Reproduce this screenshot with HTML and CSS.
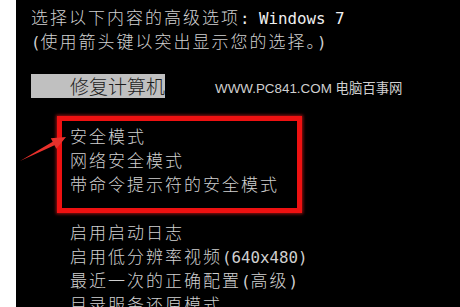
FILE: index.html
```html
<!DOCTYPE html>
<html lang="zh-CN">
<head>
<meta charset="utf-8">
<title>高级启动选项</title>
<link rel="stylesheet" href="styles.css">
</head>
<body>
<div class="strip"></div>
<main class="screen">
  <p class="line">选择以下内容的高级选项<span class="en bright">: Windows 7</span></p>
  <p class="line"><span class="en">(</span>使用箭头键以突出显示您的选择。<span class="en">)</span></p>

  <div class="selected">修复计算机</div>

  <div class="redbox">
    <p class="line">安全模式</p>
    <p class="line">网络安全模式</p>
    <p class="line">带命令提示符的安全模式</p>
  </div>

  <div class="list">
    <p class="line">启用启动日志</p>
    <p class="line">启用低分辨率视频<span class="en">(640x480)</span></p>
    <p class="line">最近一次的正确配置<span class="en">(</span>高级<span class="en">)</span></p>
    <p class="line">目录服务还原模式</p>
  </div>

  <div class="watermark">WWW.PC841.COM 电脑百事网</div>

  <svg class="arrow" width="80" height="60" viewBox="0 0 80 60" aria-hidden="true">
    <polygon points="4,49 36.7,29.7 34.8,26.2 50,25 40.4,36.8 38.5,33.3" fill="#e8302b"/>
  </svg>
</main>
</body>
</html>
```

FILE: styles.css
```css
html, body {
  margin: 0;
  padding: 0;
}

body {
  width: 460px;
  height: 307px;
  overflow: hidden;
  background: #000;
  display: flex;
  font-family: "Noto Sans CJK SC", "DejaVu Sans", sans-serif;
  font-weight: 300;
  font-size: 17px;
  letter-spacing: 2px;
  color: #d0d0d0;
}

.strip {
  width: 16px;
  flex: none;
  background: #fff;
}

.screen {
  position: relative;
  flex: 1;
  padding: 4.5px 0 0 15px;
}

.line {
  margin: 0;
  height: 24px;
  line-height: 24px;
  white-space: nowrap;
}

.en {
  font-family: "DejaVu Sans Mono", "Liberation Mono", monospace;
  font-weight: normal;
  font-size: 15.8px;
  letter-spacing: 0;
}

.bright {
  color: #f0f0f0;
}

.selected {
  margin-top: 21.5px;
  width: 134px;
  height: 24px;
  line-height: 24px;
  box-sizing: border-box;
  padding-left: 39px;
  background: #c0c0c0;
  color: #1c1c1c;
  font-size: 19px;
  letter-spacing: 0;
}

.redbox {
  margin: 18px 0 0 26px;
  width: 245px;
  box-sizing: border-box;
  border: 5px solid #ee1111;
  box-shadow: 0 0 3px 1px rgba(255, 30, 30, 0.6);
  padding: 2.5px 0 12.5px 8px;
}

.list {
  margin-top: 6.5px;
  padding-left: 39px;
}

.watermark {
  position: absolute;
  left: 199px;
  top: 80px;
  font-family: "Liberation Sans", "Noto Sans CJK SC", sans-serif;
  font-weight: normal;
  font-size: 13.4px;
  line-height: 18px;
  letter-spacing: 0;
  color: #d0d0d0;
}

.arrow {
  position: absolute;
  left: 0;
  top: 112px;
}
```
